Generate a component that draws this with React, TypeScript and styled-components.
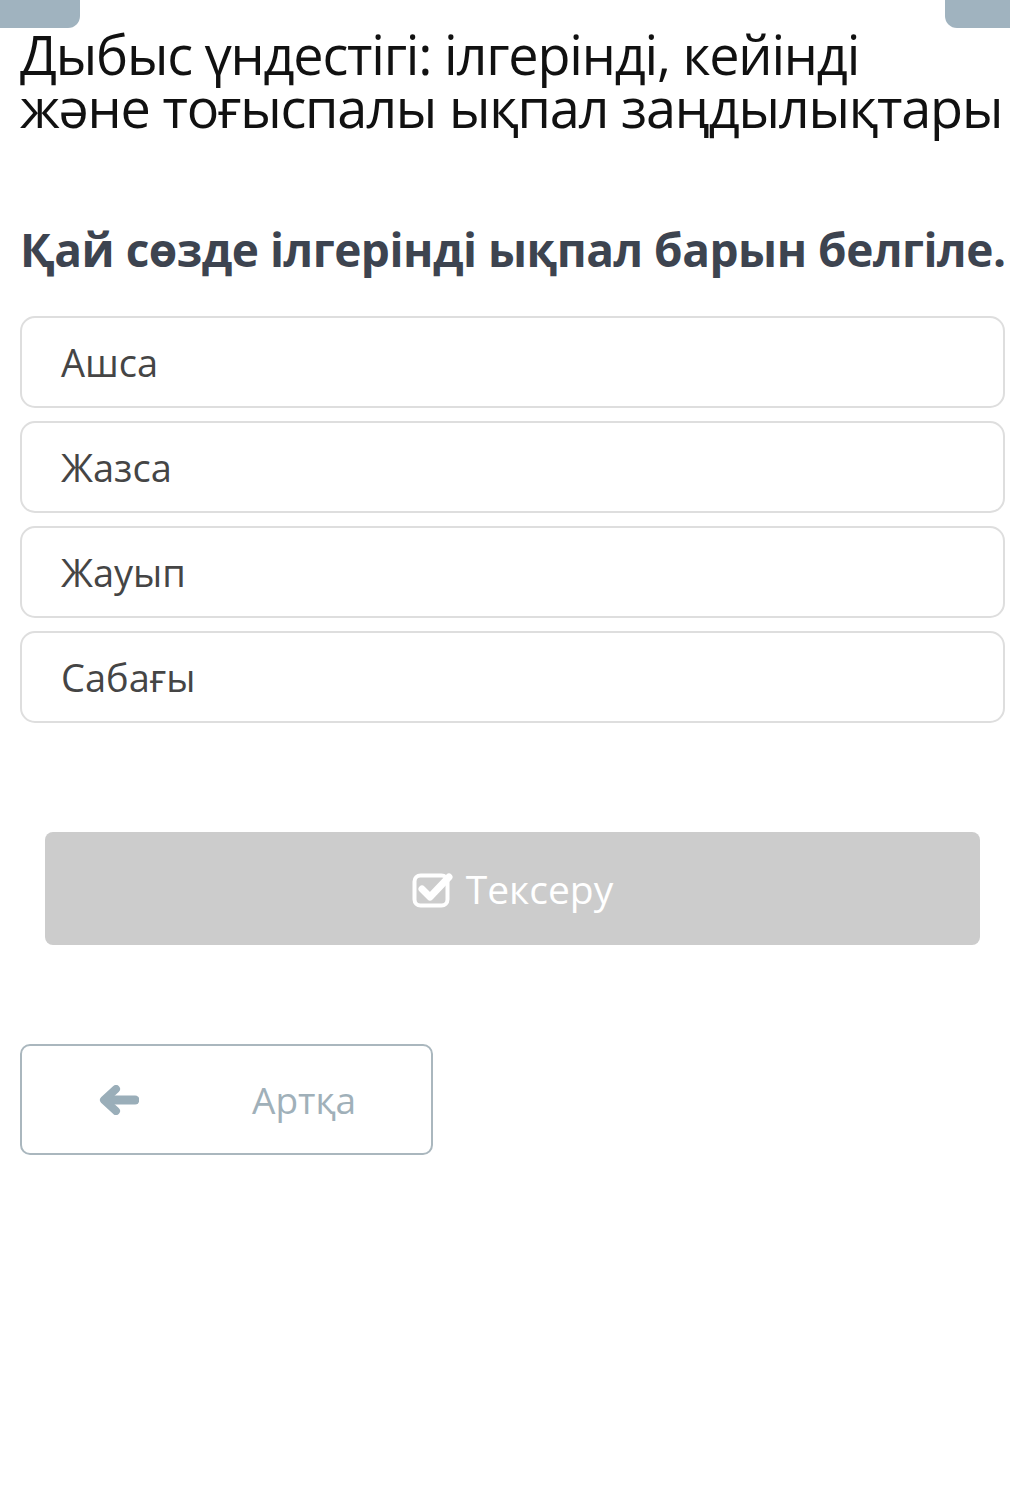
import styled, { createGlobalStyle } from "styled-components";

const GlobalStyle = createGlobalStyle`
  html, body {
    margin: 0;
    padding: 0;
    background: #ffffff;
  }
  body {
    font-family: "Open Sans", "Noto Sans", sans-serif;
  }
`;

const options = ["Ашса", "Жазса", "Жауып", "Сабағы"];

const App = () => {
	return (
		<Page>
			<GlobalStyle />
			<TopBar>
				<Tab side="left" />
				<Tab side="right" />
			</TopBar>
			<Title>
				<TitleLine>Дыбыс үндестігі: ілгерінді, кейінді</TitleLine>
				<TitleLine>және тоғыспалы ықпал заңдылықтары</TitleLine>
			</Title>
			<Question>Қай сөзде ілгерінді ықпал барын белгіле.</Question>
			<Options>
				{options.map((o) => (
					<Option key={o}>{o}</Option>
				))}
			</Options>
			<CheckButton>
				<CheckIcon />
				Тексеру
			</CheckButton>
			<BackButton>
				<ArrowIcon />
				<BackLabel>Артқа</BackLabel>
			</BackButton>
		</Page>
	);
};

const CheckIcon = () => (
	<svg width="42" height="38" viewBox="0 0 42 38" fill="none">
		<rect x="2.5" y="5.5" width="33" height="30" rx="6" stroke="#fff" strokeWidth="4" />
		<path d="M10 19 L18 27 L37 7" stroke="#fff" strokeWidth="7" strokeLinecap="round" strokeLinejoin="round" />
	</svg>
);

const ArrowIcon = () => (
	<svg width="40" height="30" viewBox="0 0 40 30" fill="none">
		<path d="M36 15 H12" stroke="#9aaeb9" strokeWidth="9" strokeLinecap="round" />
		<path d="M17 4 L5 15 L17 26" stroke="#9aaeb9" strokeWidth="8" strokeLinecap="round" strokeLinejoin="round" />
	</svg>
);

const Page = styled.div`
  width: 1010px;
  min-height: 1507px;
  box-sizing: border-box;
  padding: 0 5px 0 20px;
  display: flex;
  flex-direction: column;
  overflow: hidden;
`;

const TopBar = styled.div`
  display: flex;
  justify-content: space-between;
  margin: 0 -5px 0 -20px;
  height: 28px;
`;

const Tab = styled.div<{ side: "left" | "right" }>`
  width: ${(p) => (p.side === "left" ? "80px" : "65px")};
  height: 28px;
  background: #a0b3bf;
  border-radius: ${(p) => (p.side === "left" ? "0 0 12px 0" : "0 0 0 12px")};
`;

const Title = styled.h1`
  margin: 0;
  display: flex;
  flex-direction: column;
  font-weight: 400;
  font-size: 54px;
  letter-spacing: -1.2px;
  line-height: 53px;
  color: #111;
  white-space: nowrap;
`;

const TitleLine = styled.span`
  display: block;
  height: 53px;
`;

const Question = styled.h2`
  margin: 85px 0 0 0;
  font-weight: 700;
  font-size: 46px;
  letter-spacing: -0.5px;
  line-height: 60px;
  color: #3d4450;
  white-space: nowrap;
`;

const Options = styled.div`
  margin-top: 37px;
  display: flex;
  flex-direction: column;
  gap: 13px;
`;

const Option = styled.div`
  height: 92px;
  box-sizing: border-box;
  border: 2px solid #dedede;
  border-radius: 15px;
  padding-left: 39px;
  display: flex;
  align-items: center;
  font-size: 38px;
  color: #454545;
`;

const CheckButton = styled.div`
  margin: 109px 25px 0 25px;
  height: 113px;
  background: #cccccc;
  border-radius: 8px;
  display: flex;
  align-items: center;
  justify-content: center;
  gap: 12px;
  color: #fff;
  font-size: 39px;
`;

const BackButton = styled.div`
  margin-top: 99px;
  width: 413px;
  height: 111px;
  box-sizing: border-box;
  border: 2px solid #aab7be;
  border-radius: 10px;
  display: flex;
  align-items: center;
  padding-left: 77px;
`;

const BackLabel = styled.span`
  margin-left: 113px;
  font-size: 37px;
  color: #a0b0b9;
`;

export default App;
